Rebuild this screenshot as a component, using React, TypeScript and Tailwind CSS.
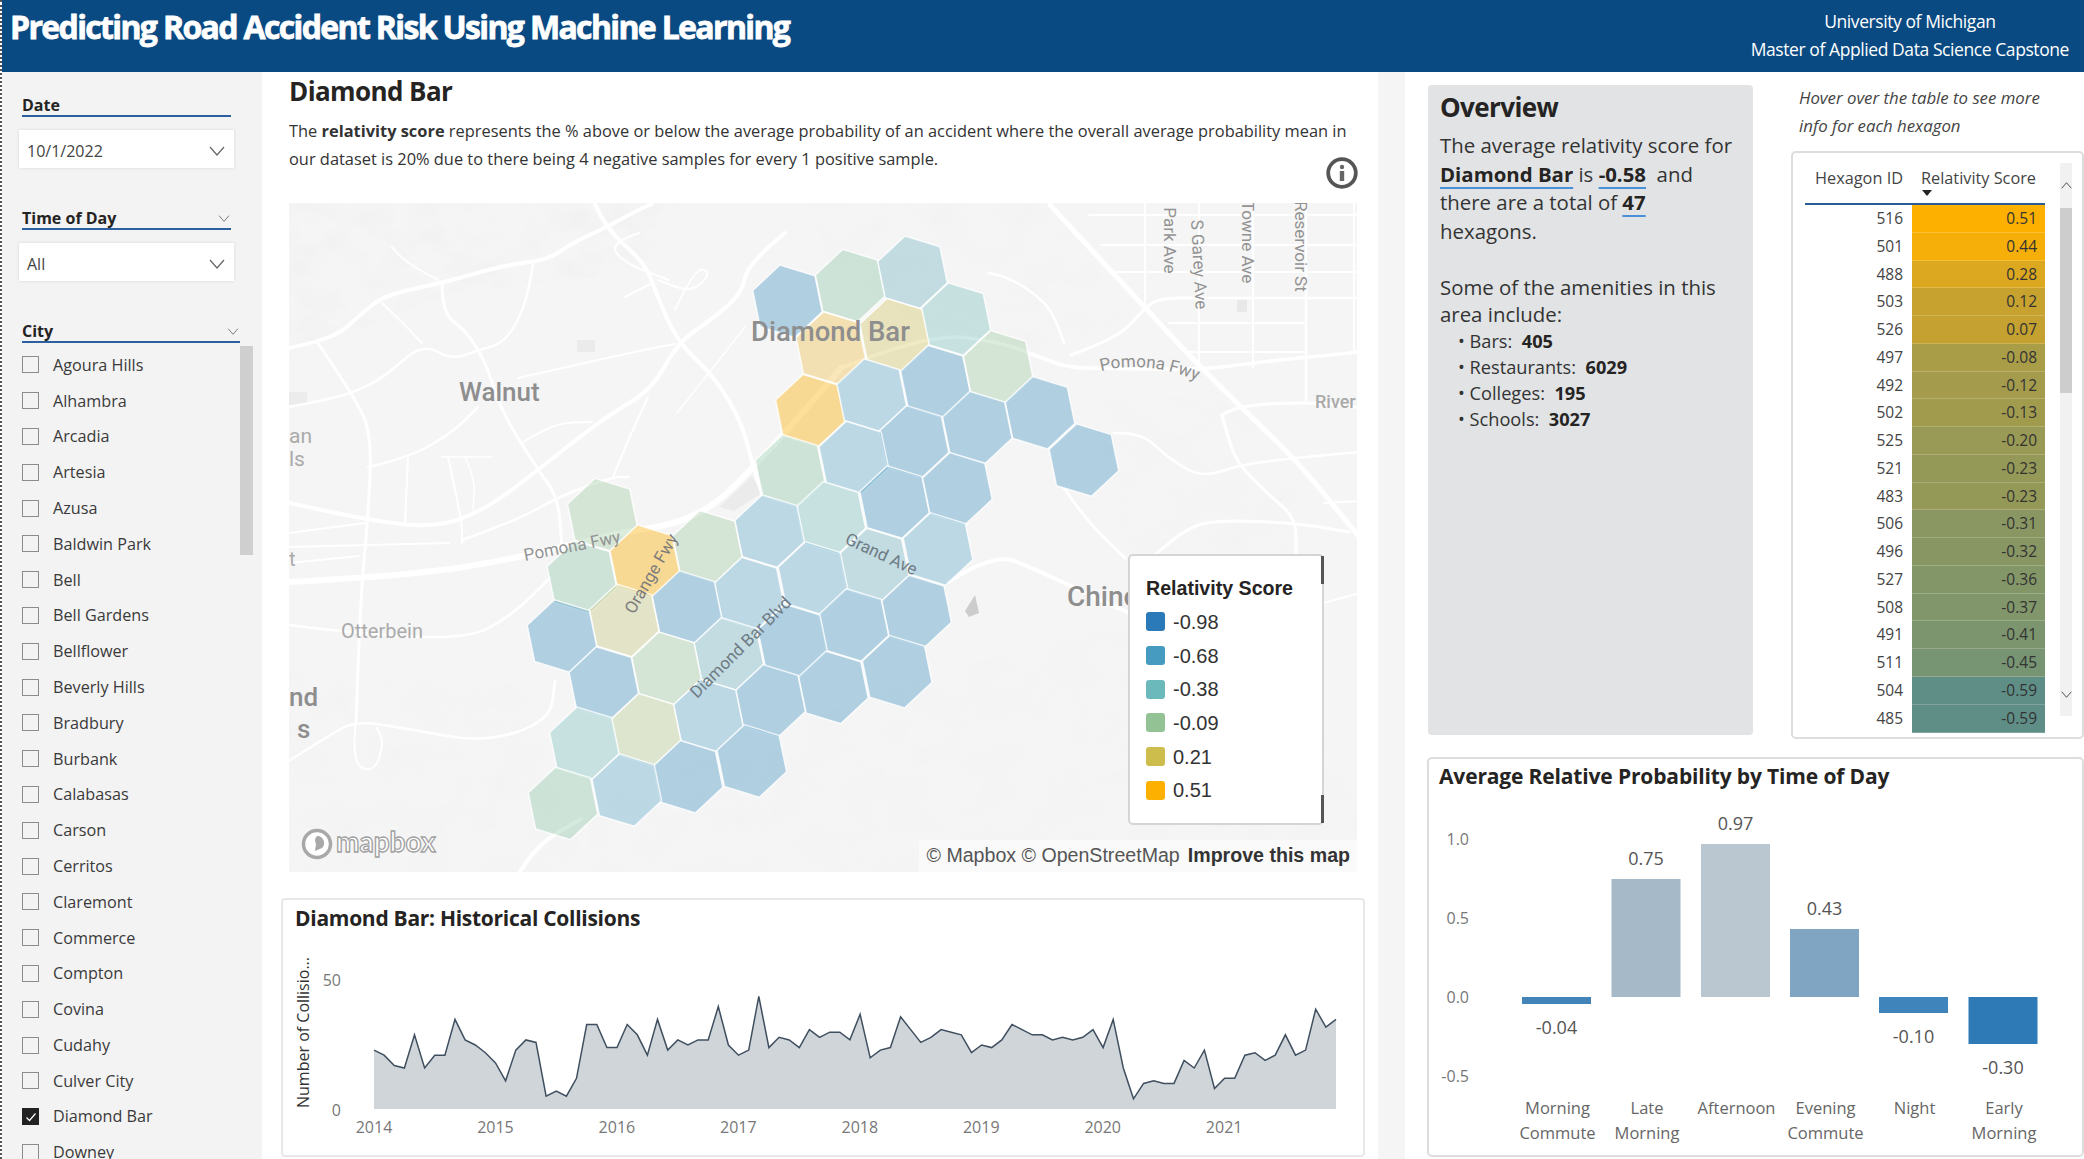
import React from 'react';

const cities = [
  'Agoura Hills', 'Alhambra', 'Arcadia', 'Artesia', 'Azusa', 'Baldwin Park', 'Bell', 'Bell Gardens',
  'Bellflower', 'Beverly Hills', 'Bradbury', 'Burbank', 'Calabasas', 'Carson', 'Cerritos', 'Claremont',
  'Commerce', 'Compton', 'Covina', 'Cudahy', 'Culver City', 'Diamond Bar', 'Downey',
];

const hexRows = [
  ['516', '0.51', 'bg-[#fdb000]'], ['501', '0.44', 'bg-[#f6ae08]'], ['488', '0.28', 'bg-[#dca81f]'],
  ['503', '0.12', 'bg-[#c7a22e]'], ['526', '0.07', 'bg-[#c4a130]'], ['497', '-0.08', 'bg-[#a99d48]'],
  ['492', '-0.12', 'bg-[#a49c4c]'], ['502', '-0.13', 'bg-[#a19b4e]'], ['525', '-0.20', 'bg-[#999a55]'],
  ['521', '-0.23', 'bg-[#959957]'], ['483', '-0.23', 'bg-[#959957]'], ['506', '-0.31', 'bg-[#8a9763]'],
  ['496', '-0.32', 'bg-[#889664]'], ['527', '-0.36', 'bg-[#839668]'], ['508', '-0.37', 'bg-[#81966a]'],
  ['491', '-0.41', 'bg-[#7c956e]'], ['511', '-0.45', 'bg-[#779473]'], ['504', '-0.59', 'bg-[#5f8e87]'],
  ['485', '-0.59', 'bg-[#5f8e87]'],
];

const legend = [
  ['-0.98', 'bg-[#2a7ab9]'], ['-0.68', 'bg-[#459cc0]'], ['-0.38', 'bg-[#6bb9ba]'],
  ['-0.09', 'bg-[#93c394]'], ['0.21', 'bg-[#cdbd4d]'], ['0.51', 'bg-[#fdb000]'],
];

const collisions = [
  23, 21, 17, 16, 29, 16, 21, 21, 35, 27, 25, 22,
  18, 11, 23, 27, 26, 5, 7, 5, 12, 33, 33, 24,
  24, 33, 29, 21, 35, 23, 27, 25, 27, 27, 40, 25,
  21, 23, 44, 24, 28, 27, 24, 31, 28, 30, 30, 27,
  37, 20, 23, 24, 36, 31, 26, 28, 31, 30, 29, 22,
  25, 24, 27, 33, 31, 29, 29, 27, 28, 27, 28, 31,
  24, 35, 16, 4, 10, 11, 10, 10, 19, 16, 23, 8,
  12, 12, 21, 22, 19, 21, 29, 21, 23, 39, 32, 35,
];

const BLUE = '#2482ba';
const LBLUE = '#4c9ec5';
const TEAL = '#6bb9ba';
const TGREEN = '#7fbf9f';
const GREEN = '#93c394';
const LIME = '#adc583';
const OLIVE = '#cdbd4d';
const YELLOW = '#efb62a';
const ORANGE = '#fdb000';

// hexagon centres, read off the reference
const hexes: [number, number, string][] = [
  [995, 250, BLUE], [1118, 215, TGREEN], [1240, 185, '#5aaabd'], [1325, 290, TEAL], [1205, 325, OLIVE],
  [1080, 355, YELLOW], [1040, 495, ORANGE], [1160, 460, LBLUE], [1285, 430, BLUE], [1408, 397, GREEN],
  [1490, 500, BLUE], [1367, 533, BLUE], [1243, 565, BLUE], [1125, 600, LBLUE], [1000, 630, TGREEN],
  [1205, 700, BLUE], [1328, 670, BLUE], [1576, 606, BLUE], [1080, 735, TEAL], [960, 765, LBLUE],
  [1290, 805, LBLUE], [1165, 840, '#5aaabd'], [1045, 870, LBLUE], [838, 800, GREEN], [715, 832, ORANGE],
  [632, 728, GREEN], [592, 868, TGREEN], [920, 905, LBLUE], [798, 935, BLUE], [675, 965, '#bcc06a'],
  [553, 1000, BLUE], [1248, 945, BLUE], [1125, 975, BLUE], [1005, 1010, BLUE], [880, 1040, '#5aaabd'],
  [758, 1072, GREEN], [635, 1105, BLUE], [1210, 1080, BLUE], [1085, 1115, BLUE], [962, 1145, BLUE],
  [840, 1178, LBLUE], [718, 1210, LIME], [597, 1240, TEAL], [925, 1280, BLUE], [800, 1315, BLUE],
  [680, 1345, LBLUE], [555, 1375, TGREEN],
];

const hexOffsets = [[34.8, 10.7], [7.5, 36.2], [-27.4, 25.5], [-34.8, -10.7], [-7.5, -36.2], [27.4, -25.5]];

const hexPoints = (zx: number, zy: number) => {
  const cx = (zx - 18) / 1.96;
  const cy = (zy - 30) / 2.24;
  return hexOffsets.map(([dx, dy]) => `${(cx + dx).toFixed(1)},${(cy + dy).toFixed(1)}`).join(' ');
};

type Pt = [number, number];

const smooth = (pts: Pt[]) => {
  let d = `M${pts[0][0]} ${pts[0][1]}`;
  for (let i = 1; i < pts.length - 1; i++) {
    const mx = (pts[i][0] + pts[i + 1][0]) / 2;
    const my = (pts[i][1] + pts[i + 1][1]) / 2;
    d += ` Q${pts[i][0]} ${pts[i][1]} ${mx} ${my}`;
  }
  const last = pts[pts.length - 1];
  return `${d} L${last[0]} ${last[1]}`;
};

const roads: [number, Pt[]][] = [
  [6, [[0, 379], [118, 373], [231, 355], [328, 330], [389, 321], [430, 299], [465, 263], [496, 230], [552, 165]]],
  [3.5, [[552, 165], [640, 130], [711, 139], [745, 152], [780, 165], [812, 165], [912, 167], [970, 159], [1071, 149]]],
  [5, [[761, 2], [856, 105], [916, 169], [974, 225], [1014, 265], [1071, 335]]],
  [4, [[0, 145], [28, 139], [53, 129], [73, 110], [96, 92], [153, 80], [216, 62], [259, 57], [283, 40], [316, 25], [349, 7], [363, 1]]],
  [4, [[306, 1], [316, 25], [356, 60], [366, 87], [388, 139], [426, 174], [453, 220], [463, 260], [473, 290]]],
  [4, [[496, 30], [459, 60], [453, 90], [426, 114], [388, 140], [363, 187], [316, 214], [249, 267], [196, 307], [146, 325], [79, 317], [0, 300]]],
  [3, [[28, 139], [63, 190], [83, 230], [79, 314], [73, 377], [70, 440], [67, 518]]],
  [2.5, [[0, 204], [36, 197], [63, 190], [96, 174], [133, 140], [163, 157], [189, 147], [216, 140], [236, 104], [244, 62]]],
  [2, [[93, 100], [113, 119], [133, 140]]],
  [3, [[153, 80], [153, 110], [176, 127], [196, 157], [213, 210], [249, 267], [269, 294], [273, 344]]],
  [2, [[229, 175], [353, 147], [386, 141]]],
  [2.5, [[79, 264], [119, 255], [163, 230], [189, 204]]],
  [2, [[119, 255], [116, 320]]],
  [2, [[159, 254], [173, 317], [173, 340]]],
  [1.5, [[153, 254], [203, 254]]],
  [1.5, [[176, 254], [186, 274], [184, 307]]],
  [2, [[233, 240], [263, 220], [303, 219]]],
  [2.5, [[173, 337], [229, 317], [269, 294], [323, 274], [340, 274]]],
  [2, [[324, 274], [340, 235], [359, 194]]],
  [2, [[0, 330], [76, 320]]],
  [2, [[0, 344], [160, 340]]],
  [2, [[0, 360], [70, 353]]],
  [1.5, [[388, 210], [456, 124]]],
  [2, [[386, 107], [406, 64], [423, 69], [403, 90], [369, 77]]],
  [2, [[350, 30], [320, 40], [335, 60], [380, 77]]],
  [2, [[103, 44], [113, 57], [149, 77]]],
  [2, [[336, 94], [363, 80]]],
  [3, [[782, 152], [829, 135], [852, 109], [869, 95], [913, 95]]],
  [2.5, [[825, 230], [852, 229], [879, 255], [913, 275], [950, 262], [1004, 255], [1071, 249]]],
  [3, [[933, 212], [940, 239], [950, 262], [980, 292], [1007, 315], [1007, 352]]],
  [3, [[933, 212], [947, 202], [1028, 199], [1071, 205]]],
  [3, [[775, 285], [795, 315], [836, 355]]],
  [3, [[866, 352], [896, 325], [930, 317], [1007, 320], [1060, 329]]],
  [2.5, [[775, 140], [765, 110], [745, 90], [720, 75], [700, 70]]],
  [4, [[231, 669], [246, 643], [292, 616]]],
  [4, [[659, 379], [705, 350], [746, 366], [792, 388], [840, 410]]],
  [2.5, [[0, 558], [42, 531], [67, 518], [115, 525], [195, 540], [261, 518], [266, 478]]],
  [2, [[67, 518], [62, 560], [85, 570], [95, 540], [88, 525]]],
  [2.5, [[0, 422], [52, 429], [175, 437], [220, 415], [261, 375]]],
  [2, [[1035, 300], [1071, 298]]],
  [2, [[1035, 400], [1071, 390]]],
  [2, [[856, 0], [856, 105]]], [2, [[910, 0], [910, 167]]], [2, [[964, 0], [964, 165]]],
  [2.5, [[1017, 0], [1017, 160], [1017, 199]]], [2, [[1065, 0], [1065, 150]]],
  [2, [[800, 12], [1071, 12]]], [2, [[812, 42], [1071, 42]]], [2, [[825, 69], [1071, 69]]],
  [2.5, [[913, 95], [1071, 95]]], [2, [[880, 120], [1017, 120]]], [2, [[900, 149], [1017, 149]]],
];

const MapLayer = () => (
  <svg width="1068" height="669" viewBox="0 0 1068 669" className="block">
    <defs>
      <filter id="terrain" x="0" y="0" width="100%" height="100%">
        <feTurbulence type="fractalNoise" baseFrequency="0.025 0.035" numOctaves="4" seed="7" />
        <feColorMatrix values="0 0 0 0 0.86  0 0 0 0 0.86  0 0 0 0 0.86  1.4 0 0 0 -0.58" />
        <feComposite in2="SourceAlpha" operator="in" />
      </filter>
      <path id="pomonaRight" d="M812 168 Q860 156 914 180" />
    </defs>
    <rect width="1068" height="669" fill="#f5f5f5" />
    <path d="M0 0 H420 L340 70 L160 90 L60 130 L0 150 Z" fill="#000" filter="url(#terrain)" />
    <path d="M520 0 H760 L840 110 L780 160 L640 130 L540 60 Z" fill="#000" filter="url(#terrain)" opacity="0.5" />
    <path d="M0 470 L230 480 L300 669 H0 Z" fill="#000" filter="url(#terrain)" opacity="0.45" />
    <path d="M300 600 L640 470 L840 420 L1068 560 V669 H300 Z" fill="#000" filter="url(#terrain)" opacity="0.45" />
    <path d="M800 200 L940 190 L1010 280 L1000 350 L840 350 Z" fill="#000" filter="url(#terrain)" opacity="0.45" />
    <rect x="288" y="137" width="18" height="12" fill="#ebebeb" />
    <rect x="0" y="189" width="18" height="13" fill="#ececec" />
    <rect x="948" y="97" width="10" height="12" fill="#e8e8e8" />
    <path d="M430 304 L463 273 L473 290 L445 308 Z" fill="#ebebeb" />
    <path d="M676 408 L686 392 L690 410 L680 414 Z" fill="#cccccc" />
    {roads.map(([w, pts], i) => (
      <path key={i} d={smooth(pts)} fill="none" stroke="#fff" strokeWidth={w} strokeLinecap="round" strokeLinejoin="round" />
    ))}
    {hexes.map(([x, y, c], i) => (
      <polygon key={i} points={hexPoints(x, y)} fill={c} fillOpacity={c === ORANGE ? 0.4 : 0.33} stroke="#fff" strokeOpacity={0.8} strokeWidth={1.5} />
    ))}
    <g fontFamily="Roboto, sans-serif" fontWeight="500" fill="#8e8e8e">
      <text x="170" y="198" fontSize="26">Walnut</text>
      <text x="462" y="138" fontSize="27.5">Diamond Bar</text>
      <text x="778" y="403" fontSize="28">Chino</text>
      <text x="0" y="503" fontSize="26" textAnchor="start">nd</text>
      <text x="8" y="535" fontSize="26">s</text>
    </g>
    <g fontFamily="Roboto, sans-serif" fill="#aaaaaa">
      <text x="0" y="240" fontSize="21">an</text>
      <text x="0" y="263" fontSize="21">ls</text>
      <text x="0" y="363" fontSize="20">t</text>
      <text x="52" y="435" fontSize="20">Otterbein</text>
      <text x="1026" y="205" fontSize="18" fontWeight="500">River</text>
    </g>
    <g fontFamily="Roboto, sans-serif" fontSize="17" fill="#939393">
      <text transform="translate(875 -10) rotate(90)">S Park Ave</text>
      <text transform="translate(902 17) rotate(87)">S Garey Ave</text>
      <text transform="translate(953 -16) rotate(90)">S Towne Ave</text>
      <text transform="translate(1006 -2) rotate(90)">Reservoir St</text>
      <text fill="#8f8f8f"><textPath href="#pomonaRight">Pomona Fwy</textPath></text>
      <text transform="translate(236 358) rotate(-11)">Pomona Fwy</text>
      <text transform="translate(345 412) rotate(-60)" fill="#7d7d7d">Orange Fwy</text>
      <text transform="translate(555 340) rotate(25)" fill="#6f7b84">Grand Ave</text>
      <text transform="translate(408 496) rotate(-45)" fill="#6f7b84">Diamond Bar Blvd</text>
    </g>
    <circle cx="28" cy="641" r="13.5" fill="#fff" stroke="#a8a8a8" strokeWidth="3.5" />
    <path d="M28 633 a7 7 0 0 1 5 12 l-7 3 1 -7 a7 7 0 0 1 1 -8 Z" fill="#a8a8a8" />
    <text x="47" y="649" fontFamily="Lato, sans-serif" fontWeight="700" fontSize="28" fill="#fff" stroke="#a0a0a0" strokeWidth="1.3">mapbox</text>
  </svg>
);

const Chevron = ({ className, stroke = '#666' }: { className: string; stroke?: string }) => (
  <svg viewBox="0 0 16 10" fill="none" className={className}>
    <path d="M1 1 L8 9 L15 1" stroke={stroke} strokeWidth="1.2" />
  </svg>
);

const SlicerTitle = ({ title, className, chevron }: { title: string; className: string; chevron?: boolean }) => (
  <div className={`flex h-[24px] items-center justify-between border-b-2 border-[#2c5f9e] pt-[2px] text-[16px] font-bold text-[#252423] ${className}`}>
    <span>{title}</span>
    {chevron && <Chevron className="mr-[1px] h-[7px] w-[12px]" />}
  </div>
);

const Dropdown = ({ value }: { value: string }) => (
  <div className="-ml-[3px] mt-[13px] flex h-[38px] w-[215px] items-center justify-between bg-white pl-[8px] pr-[8px] pt-[4px] text-[16px] text-[#444] shadow-[0_0_3px_rgba(0,0,0,0.12)]">
    <span>{value}</span>
    <Chevron className="h-[10px] w-[18px]" />
  </div>
);

const Sidebar = () => (
  <aside className="h-full w-[260px] shrink-0 overflow-hidden bg-[#f3f3f3] pl-[20px] pt-[21px]">
    <SlicerTitle title="Date" className="w-[209px]" />
    <Dropdown value="10/1/2022" />
    <SlicerTitle title="Time of Day" className="mt-[38px] w-[209px]" chevron />
    <Dropdown value="All" />
    <SlicerTitle title="City" className="mt-[38px] w-[218px]" chevron />
    <div className="flex">
      <div className="mt-[4px] w-[218px]">
        {cities.map((c) => (
          <div key={c} className="flex h-[35.8px] items-center gap-[14px] text-[16.2px] text-[#3a3a3a]">
            {c === 'Diamond Bar' ? (
              <span className="flex h-[17px] w-[17px] items-center justify-center bg-[#222]">
                <svg viewBox="0 0 12 12" className="h-[12px] w-[12px]" fill="none">
                  <path d="M1.5 6.5 L4.5 9.5 L10.5 2.5" stroke="#fff" strokeWidth="1.2" />
                </svg>
              </span>
            ) : (
              <span className="h-[17px] w-[17px] border border-[#8c8c8c]" />
            )}
            <span>{c}</span>
          </div>
        ))}
      </div>
      <div className="mt-[3px] h-[209px] w-[13px] bg-[#cfcfcf]" />
    </div>
  </aside>
);

const InfoIcon = () => (
  <svg viewBox="0 0 32 32" className="h-[32px] w-[32px]" fill="none">
    <circle cx="16" cy="16" r="13.8" stroke="#555" strokeWidth="3.8" />
    <circle cx="16" cy="10" r="2.2" fill="#666" />
    <rect x="13.8" y="14" width="4.4" height="10" fill="#666" />
  </svg>
);

const CollisionsCard = () => {
  const xs = collisions.map((_, i) => 374 + i * (962 / 95));
  const ys = collisions.map((v) => 1109 - v * 2.56);
  const line = xs.map((x, i) => `${x.toFixed(1)},${ys[i].toFixed(1)}`).join(' ');
  return (
    <section className="-ml-[8px] mt-[26px] h-[259px] w-[1084px] rounded-[4px] border-2 border-[#e8e8e8]">
      <h3 className="pl-[12px] pt-[4px] text-[21px] font-bold leading-[28px] tracking-[-0.28px] text-[#252423]">Diamond Bar: Historical Collisions</h3>
      <svg width="1080" height="223" viewBox="0 0 1080 223" className="mt-[1px] block">
        <g transform="translate(-283 -933)">
          <polygon points={`374,1109 ${line} 1336,1109`} fill="#d0d5da" />
          <polyline points={line} fill="none" stroke="#3f4f5f" strokeWidth="1.5" />
          <g fontSize="16" fill="#777" textAnchor="end">
            <text x="341" y="986">50</text>
            <text x="341" y="1116">0</text>
          </g>
          <g fontSize="16" fill="#777" textAnchor="middle">
            {[2014, 2015, 2016, 2017, 2018, 2019, 2020, 2021].map((y, i) => (
              <text key={y} x={374 + i * 121.45} y="1133">{y}</text>
            ))}
          </g>
          <text transform="translate(309 1108) rotate(-90)" fontSize="16" fill="#333">Number of Collisio...</text>
        </g>
      </svg>
    </section>
  );
};

const bars = [
  { x: 1522, top: 997, bottom: 1004, fill: '#4384b8', label: '-0.04', ly: 1034, cat: ['Morning', 'Commute'] },
  { x: 1611.5, top: 879, bottom: 997, fill: '#a5b9c9', label: '0.75', ly: 865, cat: ['Late', 'Morning'] },
  { x: 1701, top: 844, bottom: 997, fill: '#bac6d0', label: '0.97', ly: 830, cat: ['Afternoon'] },
  { x: 1790, top: 929, bottom: 997, fill: '#80a5c2', label: '0.43', ly: 915, cat: ['Evening', 'Commute'] },
  { x: 1879, top: 997, bottom: 1013, fill: '#3f84ba', label: '-0.10', ly: 1043, cat: ['Night'] },
  { x: 1968.5, top: 997, bottom: 1044, fill: '#2e7ab7', label: '-0.30', ly: 1074, cat: ['Early', 'Morning'] },
];

const ProbabilityCard = () => (
  <section className="-ml-[1px] mt-[18px] h-[400px] w-[657px] rounded-[5px] border-2 border-[#ddd]">
    <h3 className="pl-[10px] pt-[3px] text-[21px] font-bold leading-[28px] tracking-[-0.15px] text-[#252423]">Average Relative Probability by Time of Day</h3>
    <svg width="653" height="359" viewBox="0 0 653 359" className="mt-[3px] block">
      <g transform="translate(-1429 -793)">
        <g fontSize="16" fill="#777" textAnchor="end">
          <text x="1469" y="845">1.0</text>
          <text x="1469" y="924">0.5</text>
          <text x="1469" y="1003">0.0</text>
          <text x="1469" y="1082">-0.5</text>
        </g>
        {bars.map((b) => (
          <g key={b.label} textAnchor="middle">
            <rect x={b.x} y={b.top} width="69" height={b.bottom - b.top} fill={b.fill} />
            <text x={b.x + 34.5} y={b.ly} fontSize="18" fill="#555">{b.label}</text>
            {b.cat.map((c, i) => (
              <text key={c} x={b.x + 35.5} y={1114 + i * 25} fontSize="16.5" fill="#666">{c}</text>
            ))}
          </g>
        ))}
      </g>
    </svg>
  </section>
);

const HexTable = () => (
  <div className="mt-[11px] flex h-[588px] w-[293px] overflow-hidden rounded-[5px] border-2 border-[#ddd] pl-[12px]">
    <div className="w-[240px]">
      <div className="flex h-[52px] border-b-2 border-[#2a5d95] text-[16.3px] text-[#444]">
        <div className="w-[107px] pr-[9px] pt-[13px] text-right leading-[24px]">Hexagon ID</div>
        <div className="w-[133px] pl-[9px] pt-[13px] leading-[24px]">
          Relativity Score
          <svg viewBox="0 0 10 6" className="ml-[1px] block h-[6px] w-[10px]">
            <path d="M0 0 H10 L5 6 Z" fill="#252423" />
          </svg>
        </div>
      </div>
      {hexRows.map(([id, score, bg]) => (
        <div key={id} className="flex h-[27.78px] text-[15.5px] leading-[27px] text-[#444]">
          <div className="w-[107px] pr-[9px] text-right">{id}</div>
          <div className={`w-[133px] border-b border-white/20 pr-[8px] text-right text-[#333] ${bg}`}>{score}</div>
        </div>
      ))}
    </div>
    <div className="ml-[15px] mt-[10px] flex h-[553px] w-[12px] flex-col bg-[#f1f1f1]">
      <div className="flex h-[45px] items-center justify-center">
        <Chevron className="h-[7px] w-[11px] rotate-180" stroke="#333" />
      </div>
      <div className="h-[185px] bg-[#cdcdcd]" />
      <div className="flex flex-1 items-end justify-center pb-[18px]">
        <Chevron className="h-[7px] w-[11px]" stroke="#333" />
      </div>
    </div>
  </div>
);

const Overview = () => (
  <div className="h-[650px] w-[325px] shrink-0 rounded-[4px] bg-[#e1e3e5] pl-[12px] pt-[6px] text-[#333]">
    <h2 className="text-[26px] font-bold leading-[32px] tracking-[-0.6px] text-[#252423]">Overview</h2>
    <p className="mt-[8px] text-[20.4px] leading-[28.7px]">
      The average relativity score for
      <br />
      <b className="font-bold text-[#252423] underline decoration-[#4a90d9] decoration-2 underline-offset-[5px]">Diamond Bar</b> is{' '}
      <b className="font-bold text-[#252423] underline decoration-[#4a90d9] decoration-2 underline-offset-[5px]">-0.58</b>&nbsp; and
      <br />
      there are a total of <b className="font-bold text-[#252423] underline decoration-[#4a90d9] decoration-2 underline-offset-[5px]">47</b>
      <br />
      hexagons.
    </p>
    <p className="mt-[28px] text-[20.4px] leading-[27px]">
      Some of the amenities in this
      <br />
      area include:
    </p>
    <ul className="pl-[18px] text-[18.2px] leading-[26px]">
      {[['Bars', '405'], ['Restaurants', '6029'], ['Colleges', '195'], ['Schools', '3027']].map(([k, v]) => (
        <li key={k}>
          • {k}:&nbsp; <b className="font-bold text-[#252423]">{v}</b>
        </li>
      ))}
    </ul>
  </div>
);

export default function App() {
  return (
    <div className="flex h-[1159px] w-[2084px] flex-col overflow-hidden border-l-2 border-dotted border-[#555] bg-white font-['Open_Sans',sans-serif]">
      <header className="flex h-[72px] shrink-0 items-start justify-between bg-[#0a4a82] pl-[8px] pr-[15px] text-white">
        <h1 className="text-[32px] font-bold leading-[54px] tracking-[-1.65px] [-webkit-text-stroke:0.8px_white]">Predicting Road Accident Risk Using Machine Learning</h1>
        <div className="pt-[7px] text-center text-[17.5px] leading-[28px] tracking-[-0.42px]">
          <div>University of Michigan</div>
          <div>Master of Applied Data Science Capstone</div>
        </div>
      </header>
      <div className="flex min-h-0 flex-1">
        <Sidebar />
        <main className="w-[1116px] shrink-0 pl-[27px] pr-[18px] pt-[3px]">
          <h2 className="text-[26px] font-bold leading-[32px] tracking-[-0.6px] text-[#252423]">Diamond Bar</h2>
          <p className="mt-[10px] text-[16.4px] leading-[28px] text-[#333]">
            The <b className="font-bold">relativity score</b> represents the % above or below the average probability of an accident where the overall average probability mean in
            <br />
            our dataset is 20% due to there being 4 negative samples for every 1 positive sample.
          </p>
          <div className="-mt-[16px] flex justify-end pr-[2px]">
            <InfoIcon />
          </div>
          <div className="relative mt-[14px] h-[669px] w-[1068px] overflow-hidden">
            <MapLayer />
            <div className="absolute bottom-0 right-0 flex h-[32px] items-center gap-[8px] bg-white/50 pl-[8px] pr-[7px] font-['Liberation_Sans',sans-serif] text-[19.6px] text-[#555]">
              <span>© Mapbox © OpenStreetMap</span>
              <b className="font-bold text-[#333]">Improve this map</b>
            </div>
            <div className="absolute left-[839px] top-[351px] h-[271px] w-[196px] rounded-[5px] border-2 border-[#d5d5d5] bg-white pl-[16px] pt-[19px] font-['Liberation_Sans',sans-serif] text-[#333]">
              <div className="absolute right-[-2px] top-0 h-[28px] w-[3px] bg-[#555]" />
              <div className="absolute bottom-0 right-[-2px] h-[28px] w-[3px] bg-[#555]" />
              <div className="text-[19.6px] font-bold leading-[26px] text-[#252423]">Relativity Score</div>
              <div className="mt-[4px]">
                {legend.map(([v, c]) => (
                  <div key={v} className="flex h-[33.7px] items-center gap-[8px] text-[20px]">
                    <span className={`h-[19px] w-[19px] rounded-[3px] ${c}`} />
                    <span>{v}</span>
                  </div>
                ))}
              </div>
            </div>
          </div>
          <CollisionsCard />
        </main>
        <div className="w-[27px] shrink-0 bg-[#f5f5f5]" />
        <div className="flex-1 pl-[23px] pt-[13px]">
          <div className="flex h-[654px]">
            <Overview />
            <div className="ml-[38px] w-[293px] shrink-0">
              <div className="-mt-[1px] pl-[8px] text-[16.8px] italic leading-[28px] text-[#444]">
                Hover over the table to see more
                <br />
                info for each hexagon
              </div>
              <HexTable />
            </div>
          </div>
          <ProbabilityCard />
        </div>
      </div>
    </div>
  );
}
